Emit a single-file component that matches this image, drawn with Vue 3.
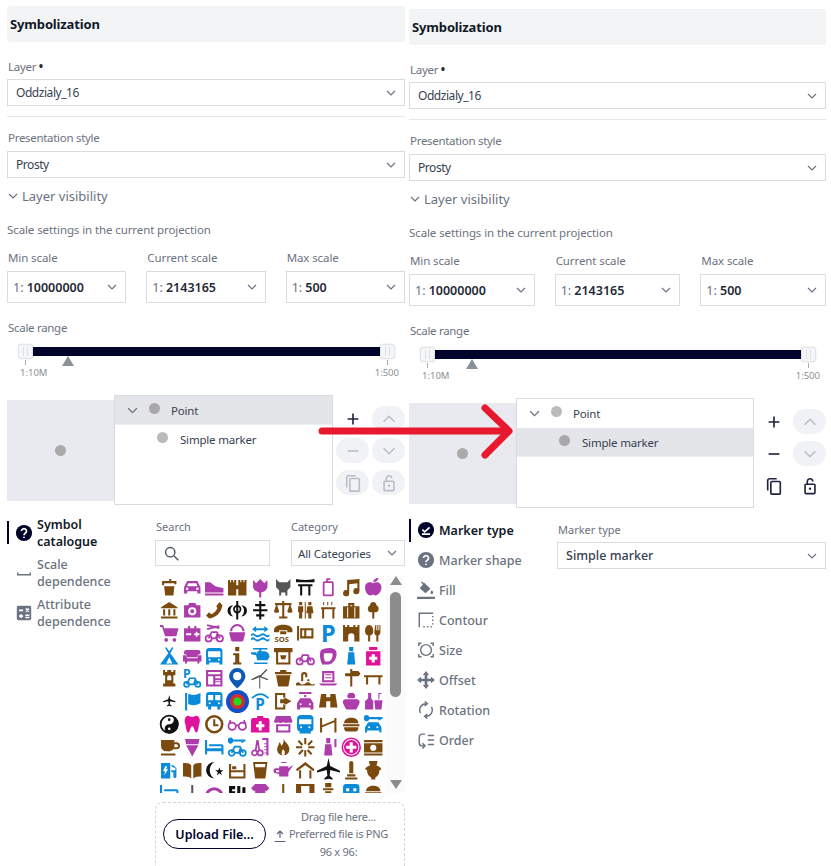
<template>
  <div class="page">
    <section v-for="panel in panels" :key="panel.id" class="panel" :class="panel.id">
      <h2 class="panel__title">Symbolization</h2>

      <label class="field-label field-label--first">Layer <span class="req">•</span></label>
      <div class="select">
        <span>Oddzialy_16</span>
        <svg class="chev" viewBox="0 0 12 12"><path d="M2 4l4 4 4-4" /></svg>
      </div>
      <div class="divider"></div>

      <label class="field-label">Presentation style</label>
      <div class="select">
        <span>Prosty</span>
        <svg class="chev" viewBox="0 0 12 12"><path d="M2 4l4 4 4-4" /></svg>
      </div>

      <div class="collapse">
        <svg class="chev" viewBox="0 0 12 12"><path d="M2 4l4 4 4-4" /></svg>
        <span>Layer visibility</span>
      </div>

      <div class="scale-title">Scale settings in the current projection</div>
      <div class="scales">
        <div v-for="s in scales" :key="s.label" class="scale">
          <label class="scale__label">{{ s.label }}</label>
          <div class="select select--scale">
            <span><i>1:</i> <b>{{ s.value }}</b></span>
            <svg class="chev" viewBox="0 0 12 12"><path d="M2 4l4 4 4-4" /></svg>
          </div>
        </div>
      </div>

      <label class="field-label field-label--range">Scale range</label>
      <div class="slider">
        <div class="slider__track"></div>
        <span class="slider__thumb slider__thumb--min"></span>
        <span class="slider__thumb slider__thumb--max"></span>
        <span class="slider__marker" :style="{ left: panel.marker + 'px' }"></span>
        <span class="slider__tick slider__tick--min">1:10M</span>
        <span class="slider__tick slider__tick--max">1:500</span>
      </div>

      <div class="symbol">
        <div class="symbol__preview"><span class="dot dot--preview"></span></div>
        <div class="symbol__tree">
          <div class="tree-row" :class="{ selected: panel.selected === 'point' }">
            <svg class="chev chev--tree" viewBox="0 0 12 12"><path d="M2 4l4 4 4-4" /></svg>
            <span class="dot"></span>
            <span class="tree-row__name">Point</span>
          </div>
          <div class="tree-row tree-row--child" :class="{ selected: panel.selected === 'marker' }">
            <span class="dot"></span>
            <span class="tree-row__name">Simple marker</span>
          </div>
        </div>
        <div class="symbol__actions" :class="{ enabled: panel.selected === 'marker' }">
          <button class="act act--on">
            <svg viewBox="0 0 20 20"><path d="M10 4v12M4 10h12" /></svg>
          </button>
          <button class="act act--soft">
            <svg viewBox="0 0 20 20"><path d="M4 13l6-6 6 6" /></svg>
          </button>
          <button class="act act--toggle">
            <svg viewBox="0 0 20 20"><path d="M4 10h12" /></svg>
          </button>
          <button class="act act--soft">
            <svg viewBox="0 0 20 20"><path d="M4 7l6 6 6-6" /></svg>
          </button>
          <button class="act act--toggle">
            <svg viewBox="0 0 20 20"><path d="M13 2H5a2 2 0 0 0-2 2v11" /><rect x="6.5" y="5" width="10.5" height="14" rx="1" /></svg>
          </button>
          <button class="act act--toggle">
            <svg viewBox="0 0 20 20"><path d="M7 8V5a3 3 0 0 1 6 0" /><rect x="4.5" y="8" width="11" height="10.5" rx="1" /><circle class="solid" cx="10" cy="13" r="1.3" /></svg>
          </button>
        </div>
      </div>

      <div class="lower">
        <nav class="side">
          <a v-for="item in panel.nav" :key="item.label" class="side__item" :class="{ active: item.active, tall: panel.id === 'catalogue' }">
            <svg class="side__icon" viewBox="0 0 20 20">
              <path v-if="item.fill" class="fill" fill-rule="evenodd" :d="item.fill" />
              <path v-if="item.line" class="line" :d="item.line" />
              <path v-if="item.knock" class="knock" :d="item.knock" />
            </svg>
            <span>{{ item.label }}</span>
          </a>
        </nav>

        <div v-if="panel.id === 'catalogue'" class="browser">
          <div class="filters">
            <div class="filter">
              <label class="mini-label">Search</label>
              <div class="search">
                <svg viewBox="0 0 20 20"><circle cx="8.5" cy="8.5" r="5.5" /><path d="M13 13l5 5" /></svg>
              </div>
            </div>
            <div class="filter">
              <label class="mini-label mini-label--flush">Category</label>
              <div class="select select--cat">
                <span>All Categories</span>
                <svg class="chev" viewBox="0 0 12 12"><path d="M2 4l4 4 4-4" /></svg>
              </div>
            </div>
          </div>

          <div class="symbols">
            <div class="symbols__grid">
              <svg v-for="(ic, i) in icons" :key="i" class="sym" :class="{ big: ic.big }" viewBox="0 0 20 20" :style="{ color: ic.c }">
                <path v-if="ic.d" fill="currentColor" fill-rule="evenodd" :d="ic.d" />
                <path v-if="ic.s" fill="none" stroke="currentColor" stroke-width="1.7" :d="ic.s" />
                <text v-if="ic.t" :x="ic.tx" :y="ic.ty" :font-size="ic.ts" fill="currentColor" class="sym__text">{{ ic.t }}</text>
                <template v-if="ic.rings">
                  <circle v-for="r in ic.rings" :key="r[0]" cx="10" cy="10" :r="r[0]" :fill="r[1]" />
                </template>
              </svg>
            </div>
            <div class="scroll">
              <span class="scroll__up"></span>
              <span class="scroll__thumb"></span>
              <span class="scroll__down"></span>
            </div>
          </div>

          <div class="upload">
            <button class="upload__btn">Upload File...</button>
            <svg class="upload__icon" viewBox="0 0 14 14"><path d="M7 9V2M4 5l3-3 3 3M1.5 12.5h11" /></svg>
            <p class="upload__hint">Drag file here...<br />Preferred file is PNG<br />96 x 96:</p>
          </div>
        </div>

        <div v-else class="marker">
          <label class="mini-label">Marker type</label>
          <div class="select select--marker">
            <span>Simple marker</span>
            <svg class="chev" viewBox="0 0 12 12"><path d="M2 4l4 4 4-4" /></svg>
          </div>
        </div>
      </div>
    </section>

    <svg class="arrow" viewBox="0 0 831 866">
      <path d="M322 431H508M485 408l24 23-24 24" />
    </svg>
  </div>
</template>

<script setup>
const B = '#7a4a0f'
const P = '#ad3dab'
const U = '#0a8ad8'
const K = '#111111'
const M = '#e0129c'
const G = '#555555'

function circle(cx, cy, r) {
  return `M${cx - r} ${cy}a${r} ${r} 0 1 0 ${r * 2} 0a${r} ${r} 0 1 0 ${-r * 2} 0z`
}

const bike = (y = 15, r = 3) =>
  `${circle(4.5, y, r)}${circle(15.5, y, r)}M4.5 ${y}l3-6h5l3 6M7.5 ${y}h4l2-6`
const bikeSmall = bike(15, 3)

const icons = [
  // row 1
  { c: B, d: 'M5 9h10l-1 9H6zM3 4h7V2h2v2h5v3h-2V6H5v2H3z' },
  { c: P, d: `M5 4h10l3 6v6h-3v-2H5v2H2v-6zM6 6l-1 3h10l-1-3z${circle(5, 11.5, 1.3)}${circle(15, 11.5, 1.3)}` },
  { c: P, d: 'M1 5h5l5 4 8 2v4H1zM1 16h18v2H1z' },
  { c: B, d: 'M1 3h2v2h1V3h2v2h1V3h2v15H1zM11 3h2v2h1V3h2v2h1V3h2v15h-8zM9 8h2v4H9z' },
  { c: P, d: 'M3 3l3 3 4-4 4 4 3-3v7a7 7 0 0 1-6 5v5H9v-5a7 7 0 0 1-6-5z' },
  { c: G, d: 'M3 2l3 3h8l3-3v8l-3 3v5h-2v-3H8v3H6v-5l-3-3z' },
  { c: K, d: 'M1 2q9 2 18 0v3H1zM3 7h14v2h-2v9h-2V9H7v9H5V9H3z' },
  { c: P, s: 'M6.5 5h7a1 1 0 0 1 1 1v11a1 1 0 0 1-1 1h-7a1 1 0 0 1-1-1V6a1 1 0 0 1 1-1zM9 5V2h3' },
  { c: B, d: 'M6 3l12-1v12a3 3 0 1 1-2-3V6L8 7v9a3 3 0 1 1-2-3z' },
  { c: P, d: 'M10 6c3-2 8-1 8 4s-4 8-6 8-1-1-2-1-1 1-3 1-5-3-5-8 5-6 8-4zM10 5c0-2 2-4 5-4 0 2-2 4-5 4z' },
  // row 2
  { c: B, d: 'M10 2l8 5v1H2V7zM4 9h2v6H4zM9 9h2v6H9zM14 9h2v6h-2zM2 16h16v2H2z' },
  { c: P, d: `M2 5h4l1-2h6l1 2h4v12H2z${circle(10, 11, 4)}${circle(10, 11, 2)}` },
  { c: B, d: 'M15 2l3 3c-1 7-6 12-13 13l-3-3 3-3 2 2c3-1 5-4 6-6l-1-2z' },
  { c: K, d: 'M9 1h2v18H9zM6 5a7 7 0 0 0 0 11 5 5 0 0 1 0-11zM14 5a7 7 0 0 1 0 11 5 5 0 0 0 0-11z', s: circle(10, 9, 3.2) },
  { c: K, d: 'M9 1h2v3h4v2h-4v3h6v2h-6v3h3v2h-3v3H9v-3H6v-2h3v-3H3V9h6V6H5V4h4z' },
  { c: B, d: 'M9 1h2v2h7v2h-1l2 6c0 2-5 2-5 0l2-6h-5v11h3v2H6v-2h3V5H4l2 6c0 2-5 2-5 0l2-6H2V3h7z' },
  { c: B, d: 'M4 2h3v3H4zM3 6h5v6H7v6H4v-6H3zM13 2h3v3h-3zM12 6h5l1 7h-2v5h-3v-5h-2zM9.5 2h1v16h-1z' },
  { c: B, d: 'M3 7h14v2h-1v9h-2V9H6v9H4V9H3zM5 2h1v3H5zM9 2h1v3H9zM13 2h1v3h-1z' },
  { c: B, d: 'M7 3h6v3h5v12H2V6h5zM9 5v1h2V5zM6 7v10h1V7zM13 7v10h1V7z' },
  { c: B, d: 'M10 2c3 0 3 3 3 3 3 1 3 6 0 7h-2v6H9v-6H7c-3-1-3-6 0-7 0 0 0-3 3-3z' },
  // row 3
  { c: P, d: `M1 2h3l1 3h14l-2 8H6L3 4H1z${circle(7, 16.5, 1.8)}${circle(15, 16.5, 1.8)}` },
  { c: P, d: 'M2 5h4V3h2v2h4V3h2v2h4v13H2zM4 10v2h5v-2zM12 10v2h1.5v1.5H15V12h2v-2h-2V8.5h-1.5V10z' },
  { c: P, s: `${bikeSmall}M3 2l12 3M3 6l12-3` },
  { c: P, d: 'M2 9h16l-2 8a2 2 0 0 1-2 1H6a2 2 0 0 1-2-1zM3 8a7 7 0 0 1 14 0h-2a5 5 0 0 0-10 0z' },
  { c: U, d: 'M2 6l4-3v2h8V3l4 3-4 3V7H6v2zM1 11q2-2 4 0t5 0 5 0 4 0v2q-2 2-4 0t-5 0-5 0-4 0zM1 15q2-2 4 0t5 0 5 0 4 0v2q-2 2-4 0t-5 0-5 0-4 0z' },
  { c: B, d: 'M1 7c0-7 18-7 18 0v2h-5V7H6v2H1zM7 8h6v3H7z', t: 'SOS', tx: 1.5, ty: 19, ts: 7.5 },
  { c: B, d: 'M2 3h2v14H2zM5 5h13v10H5zM7 7v6h2V7zM11 7v6h5V7z' },
  { c: U, t: 'P', tx: 3, ty: 18.5, ts: 23 },
  { c: B, d: 'M2 2h2v2h2V2h2v2h4V2h2v2h2V2h2v16h-5v-5a3 3 0 0 0-6 0v5H2z' },
  { c: B, d: 'M6 2c3 0 4 3 4 6s-2 4-3 4v6H5v-6C4 12 2 11 2 8s1-6 4-6zM12 2h1v5h1V2h1v5h1V2h1v7c0 2-1 3-2 3v6h-2v-6c-1 0-2-1-2-3z' },
  // row 4
  { c: U, d: 'M7 1l3 4 3-4 1 1-3 5 8 11H1L9 7 6 2zM10 11l-3 6h6z' },
  { c: P, d: 'M4 4h12a2 2 0 0 1 2 2v2h-2l-1 3H5L4 8H2V6a2 2 0 0 1 2-2zM1 9h3l1 3h10l1-3h3v6h-2v2h-2v-2H5v2H3v-2H1z' },
  { c: U, d: `M5 2h10a3 3 0 0 1 3 3v13h-3v-2H5v2H2V5a3 3 0 0 1 3-3zM4 5v6h12V5z${circle(5.5, 13.5, 1)}${circle(14.5, 13.5, 1)}` },
  { c: B, d: 'M8 1h4v4H8zM6 7h6v9h2v2H6v-2h2V9H6z' },
  { c: U, d: 'M3 2h14v1.5h-6V5h3a5 5 0 0 1 5 5v1l-2 3H7L6 9 1 8V6h5l1 2V5h2V3.5H3zM4 16h13v1.5H4z' },
  { c: B, d: 'M1 2h18v4h-2v12H3V6H1zM5 6v10h10V6zM7 9h6l-1 4H8z' },
  { c: P, s: bikeSmall },
  { c: P, d: 'M3 4c5-3 14-3 15 2s-3 12-8 12H4c-2-5-3-10-1-14zM6 7c-1 3 0 6 1 8h3c3 0 5-5 4-8z' },
  { c: U, d: 'M8 1h4v4H8zM7 6h6v3l1 9H6l1-9z' },
  { c: M, d: 'M6 1h8v3H6zM3 5h14v14H3zM8.5 8v2.5H6v3h2.5V16h3v-2.5H14v-3h-2.5V8z' },
  // row 5
  { c: B, d: 'M4 2h2v2h2V2h4v2h2V2h2v5h-2v8h2v3H4v-3h2V7H4zM8 9v3h4V9a2 2 0 0 0-4 0z' },
  { c: U, s: bike(16, 2.4), t: 'P', tx: 1, ty: 10, ts: 12 },
  { c: P, d: 'M2 2h16v16H2zM4 4v2h12V4zM4 8v8h5V8zM11 8v2h5V8zM11 12v1h5v-1zM11 14v2h5v-2z' },
  { c: '#0b5bb5', d: `M10 0a8 8 0 0 1 8 8c0 4-5 9-8 12-3-3-8-8-8-12a8 8 0 0 1 8-8z${circle(10, 8, 4)}` },
  { c: G, d: 'M10 7l6-6 1 1-6 6 7 3-1 1-7-3v11H9V9l-7 3-1-1 8-4z' },
  { c: B, d: 'M7 2h6v2h5v2H2V4h5zM3 7h14l-2 11H5z' },
  { c: B, d: 'M6 13V7a3 3 0 0 1 6 0v2h-2V7a1 1 0 0 0-2 0v6zM12 11h2v2h-2zM1 15q2-2 4 0t5 0 5 0 4 0v2H1z' },
  { c: P, d: 'M4 3h12v11H4zM6 5v7h8V5zM1 15h18l-2 2H3zM7 6h6v1H7zM7 9h6v1H7z' },
  { c: B, d: 'M9 1h2v2h6l2 2.5L17 8h-6v10H9V8H4V5h5z' },
  { c: B, d: 'M1 7h18v2h-2v7h-2V9H5v7H3V9H1z' },
  // row 6
  { c: K, d: 'M10 4l1 4 5 2v1l-5-1-.5 3 1.5 1v1l-2-.5-2 .5v-1l1.5-1L9 10l-5 1v-1l5-2z' },
  { c: U, d: 'M3 2h2v17H3zM6 3q6 2 12-1v10q-6 3-12 1z' },
  { c: U, d: `M5 1h10a3 3 0 0 1 3 3v11h-2v3h-3v-3H7v3H4v-3H2V4a3 3 0 0 1 3-3zM4 4v5h5V4zM11 4v5h5V4z${circle(5.5, 12, 1)}${circle(14.5, 12, 1)}` },
  { c: U, rings: [[10, '#1250c8'], [6.5, '#d92b2b'], [3.5, '#1fdc1f']], big: true },
  { c: U, s: 'M2 7q8-8 16 0', t: 'P', tx: 5, ty: 19, ts: 15 },
  { c: B, d: 'M2 2h10v5h-2V4H4v12h6v-3h2v5H2zM11 6l7 4-7 4v-2H7V8h4z' },
  { c: P, d: `M5 7h10l3 5v6h-3v-2H5v2H2v-6zM4 1h12v2H4zM9 4h2v2H9z${circle(5.5, 13, 1)}${circle(14.5, 13, 1)}` },
  { c: B, d: 'M3 3h5v3h4V3h5l2 13h-7v-6H8v6H1z' },
  { c: P, d: 'M4 8h12a3 3 0 0 1 2 4l-3 6H5l-3-6a3 3 0 0 1 2-4zM10 2a3 3 0 0 1 3 5H7a3 3 0 0 1 3-5z' },
  { c: P, d: 'M5 2h3v5l2 3v8H2v-8l3-3zM11 9h8l-1 9h-6zM15 2h3v1h-2v5h-1z' },
  // row 7
  { c: K, d: `M10 1a9 9 0 0 1 0 18 4.5 4.5 0 0 1 0-9 4.5 4.5 0 0 0 0-9z${circle(10, 14.5, 1.3)}${circle(10, 5.5, 1.3)}`, s: circle(10, 10, 8.4) },
  { c: M, d: 'M5 2c2-1 3 1 5 1s3-2 5-1 3 4 2 7-1 9-3 9-2-6-4-6-2 6-4 6-2-6-3-9 0-6 2-7z' },
  { c: B, d: `${circle(10, 10, 9)}${circle(10, 10, 6.5)}M9 5h2v5h3v2H9z` },
  { c: P, s: `${circle(5, 12, 3.6)}${circle(15, 12, 3.6)}M8.5 11h3M1.5 11l2-5M18.5 11l-2-5` },
  { c: M, d: 'M7 4V2h6v2h4a2 2 0 0 1 2 2v12H1V6a2 2 0 0 1 2-2zM8.5 7v3H6v3h2.5v3h3v-3H14v-3h-2.5V7z' },
  { c: P, d: 'M3 2h14l2 5c0 2-3 2-4 1-1 1-3 1-5 0-2 1-4 1-5 0-1 1-4 1-4-1zM3 10h14v8H3zM5 12v4h10v-4z' },
  { c: U, d: `M6 1h8a4 4 0 0 1 4 4v9a3 3 0 0 1-3 3l1 2H4l1-2a3 3 0 0 1-3-3V5a4 4 0 0 1 4-4zM4 5v5h12V5z${circle(6, 13, 1)}${circle(14, 13, 1)}` },
  { c: B, d: 'M2 4h2v14H2zM16 4h2v14h-2zM4 11l12-5v2L4 13z' },
  { c: B, d: 'M3 9c0-7 14-7 14 0zM2 10h16v2H2zM3 13h14c0 3-1 4-3 4H6c-2 0-3-1-3-4z' },
  { c: U, d: `M1 4a2.5 2.5 0 0 1 5-1h13v2h-2v1h-2V5H6a2.5 2.5 0 0 1-5-1zM5 8h10l3 5v5h-2v-2H4v2H2v-5z${circle(6, 13, 1)}${circle(14, 13, 1)}` },
  // row 8
  { c: B, d: 'M2 3h13v2h2a3 3 0 0 1 0 7h-3a6 6 0 0 1-5 2H7a5 5 0 0 1-5-5zM15 7v3h2a1.5 1.5 0 0 0 0-3zM2 16h14v2H2z' },
  { c: P, d: 'M3 2h14l-1 5H4zM4 8h12l-6 11z' },
  { c: U, d: 'M1 3h2v8h14V9H5V7h12a2 2 0 0 1 2 2v8h-2v-3H3v3H1z' },
  { c: U, d: 'M1 3.5a2.5 2.5 0 0 1 5-1h12v2h-2v1h-2v-1H6a2.5 2.5 0 0 1-5-1z', s: bike(15.5, 2.8) },
  { c: P, d: 'M12 1h6v17h-2v-2h-2v-1h2v-2h-2v-1h2v-2h-2V9h2V7h-2V6h2V3h-4z', s: `${circle(4.5, 15.5, 2.5)}${circle(10, 15.5, 2.5)}M5.5 13.5L7 3M9 13.5L7.5 3` },
  { c: B, d: 'M10 1c1 4 6 6 6 11a6 6 0 0 1-12 0c0-3 2-4 2-7 2 1 2 3 2 4 2-2 3-5 2-8zM10 12c-2 2-2 6 0 6s2-4 0-6z' },
  { c: B, d: 'M9 1h2v6H9zM9 13h2v6H9zM1 9h6v2H1zM13 9h6v2h-6zM4 3l4 4-1.5 1.5-4-4zM16 3l1.5 1.5-4 4L12 7zM7 12l1.5 1.5-4 4L3 16zM13 12l4 4-1.5 1.5-4-4z' },
  { c: P, d: 'M8 1h4v5H8zM7 7h6l1 11H6zM16 2h2v8h-2z' },
  { c: M, d: `${circle(10, 10, 9.5)}${circle(10, 10, 8)}${circle(10, 10, 7)}M8.5 5v3.5H5v3h3.5V15h3v-3.5H15v-3h-3.5V5z` },
  { c: B, d: `M1 3h18v2H1zM1 6h18v9H1z${circle(10, 10.5, 3)}M1 16h18v2H1z` },
  // row 9
  { c: U, d: 'M2 3h9v15H2zM6 6l-2 5h2l-1 4 4-6H7l1-3zM12 5h2l3 3v8a1.5 1.5 0 0 1-3 0v-4h-2v-2h4V8l-4-2z' },
  { c: B, d: 'M1 3c3 0 6 0 8 2v13c-2-2-5-2-8-2zM19 3c-3 0-6 0-8 2v13c2-2 5-2 8-2z' },
  { c: K, d: 'M10 2a8 8 0 1 0 0 16 9.5 9.5 0 0 1 0-16zM15 7l1 3h3l-2.5 2 1 3-2.5-2-2.5 2 1-3L11 10h3z' },
  { c: B, d: 'M2 4h2v6h12V4h2v14H2zM5 6h4v3H5zM4 12v4h12v-4z' },
  { c: B, d: 'M3 2h14l-2 16H5zM5 4l.3 3h9.4l.3-3z' },
  { c: P, d: 'M6 6h9v10H6zM15 8l4-3v1l-4 6zM6 8H3a2 2 0 0 0 0 5l3 1v-2H3v-2h3zM8 2h5v1H8z' },
  { c: B, d: 'M10 2l9 7-1 2-8-6-8 6-1-2zM4 10h2v8H4zM14 10h2v8h-2z' },
  { c: K, d: 'M10 0l1.5 7 8.5 4v1.5l-8.500-2-.5 5 2.5 2V19L10 18l-3.500 1v-1.5l2.500-2-.5-5-8.500 2V11l8.500-4z', big: true },
  { c: B, d: 'M8 3a2 2 0 0 1 4 0v10H8zM6 14h8v2H6zM4 17h12v2H4z' },
  { c: B, d: 'M6 1h8v2l-1 2c3 1 5 3 5 4l-2 1c0 4-2 6-4 7v2H8v-2c-2-1-4-3-4-7L2 9c0-1 2-3 5-4L6 3z' },
  // row 10, cut off by the list edge
  { c: U, d: 'M1 3h2v8h14V9H5V7h12a2 2 0 0 1 2 2v8h-2v-3H3v3H1z' },
  { c: G, d: 'M9 3h2v15H9z' },
  { c: P, d: 'M1 14a9 9 0 0 1 18 0h-3a6 6 0 0 0-12 0z' },
  { c: K, d: 'M2 4h6v3H5v2h3v3H2zM10 4h3v8h-3zM15 5h3v7h-3z' },
  { c: P, d: 'M5 2h10l4 4-3 3-1-1v10H5V8L4 9 1 6z' },
  { c: B, d: 'M9 2h2v16H9z' },
  { c: B, d: 'M1 2h18v16H1zM6 4v12h8V4z' },
  { c: B, d: 'M7 1h6v4H7zM5 6h10v2H5zM7 9h6v9H7z' },
  { c: U, d: 'M2 5a3 3 0 0 1 3-3h10a3 3 0 0 1 3 3v13H2zM5 6v3h3V6zM12 6v3h3V6z' },
  { c: B, d: 'M3 9c0-7 14-7 14 0zM2 10h16v2H2zM3 13h14c0 3-1 4-3 4H6c-2 0-3-1-3-4z' },
]

const scales = [
  { label: 'Min scale', value: '10000000' },
  { label: 'Current scale', value: '2143165' },
  { label: 'Max scale', value: '500' },
]

const questionFill = circle(10, 10, 9)
const questionMark = 'M7.2 7.8a2.8 2.8 0 1 1 4.2 2.5c-.9.5-1.400 1-1.400 2.200M10 14.200v1.300'

const panels = [
  {
    id: 'catalogue',
    marker: 55,
    selected: 'point',
    nav: [
      { label: 'Symbol catalogue', active: true, fill: questionFill, knock: questionMark },
      { label: 'Scale dependence', line: 'M3 9.5v2.5h14V9.5' },
      {
        label: 'Attribute dependence',
        fill: 'M4 2h12a2 2 0 0 1 2 2v12a2 2 0 0 1-2 2H4a2 2 0 0 1-2-2V4a2 2 0 0 1 2-2z',
        knock: 'M4.5 7h4.5M6.75 11.5v4M4.5 13.5h4.5M11.5 12.5h4.5M11.5 15h4.5M12 5l3.5 3.5M15.5 5L12 8.5',
      },
    ],
  },
  {
    id: 'marker-panel',
    marker: 57,
    selected: 'marker',
    nav: [
      { label: 'Marker type', active: true, fill: questionFill, knock: 'M6 9.5l2.5 2.5 5.5-5M5.5 14.5h9' },
      { label: 'Marker shape', fill: questionFill, knock: questionMark },
      { label: 'Fill', fill: 'M8 2l7 6.500-5.500 5L3 8zM16.500 10c1 1.500 1.500 2.200 1.500 3a1.500 1.500 0 0 1-3 0c0-.8.5-1.500 1.500-3zM0 17.500h20V20H0z', line: 'M5 1l3 3' },
      { label: 'Contour', line: 'M18 2.5H2.5V18M7 17.5h1.5M11 17.5h1.5M15 17.5h1.5M17.5 15v-1.5M17.5 11V9.5M17.5 7V5.5' },
      { label: 'Size', line: 'M16 10a6 6 0 1 1-12 0 6 6 0 0 1 12 0zM2 5.5V2.5h3M15 2.5h3v3M18 14.5v3h-3M5 17.5H2v-3' },
      { label: 'Offset', fill: 'M10 0l3.5 4.5h-2v4h4v-2L20 10l-4.500 3.500v-2h-4v4h2L10 20l-3.500-4.500h2v-4h-4v2L0 10l4.500-3.500v2h4v-4h-2z' },
      { label: 'Rotation', line: 'M4 13.5A7 7 0 0 1 10.5 3M16 6.5A7 7 0 0 1 9.5 17M8.5 0.5l3 2.5-3 2.5M11.5 14.5l-3 2.5 3 2.5' },
      { label: 'Order', line: 'M9 3.5H6a3.5 3.5 0 0 0-3.5 3.5v6A3.5 3.5 0 0 0 6 16.5h2M6 13.5l3 3-3 3M12 5h7M12 10h7M12 15h7' },
    ],
  },
]
</script>

<style>
html,
body {
  margin: 0;
  overflow: hidden;
  background: #fff;
}
</style>

<style scoped>
.page {
  position: relative;
  display: flex;
  align-items: flex-start;
  height: 866px;
  overflow: hidden;
  font-family: "Noto Sans", "Liberation Sans", sans-serif;
  color: #374151;
}

.panel {
  display: flex;
  flex-direction: column;
}
.panel.catalogue {
  width: 398px;
  margin: 6px 0 0 7px;
}
.panel.marker-panel {
  width: 417px;
  margin: 9px 0 0 4px;
}

.panel__title {
  height: 36px;
  margin: 0;
  padding: 0 3px;
  border-radius: 3px;
  background: #f3f4f6;
  font-size: 13px;
  font-weight: 700;
  line-height: 36px;
  letter-spacing: -0.15px;
  color: #111827;
}

.field-label {
  display: block;
  height: 16px;
  margin: 13px 1px 5px;
  font-size: 11.5px;
  line-height: 16px;
  letter-spacing: -0.3px;
  color: #6b7280;
}
.field-label--first {
  margin-top: 17px;
  margin-bottom: 4px;
}
.field-label--range {
  margin-top: 17px;
  margin-bottom: 4px;
}
.req {
  color: #1f2937;
  font-weight: 700;
}

.select {
  display: flex;
  align-items: center;
  justify-content: space-between;
  box-sizing: border-box;
  height: 27px;
  padding: 0 7px 0 8px;
  border: 1px solid #d9dde3;
  font-size: 12px;
  letter-spacing: -0.45px;
  color: #374151;
}
.select--scale {
  height: 32px;
  padding-left: 5px;
  letter-spacing: 0;
}
.select--scale i {
  font-style: normal;
  font-size: 12.5px;
  color: #6b7280;
}
.select--scale b {
  font-size: 12.5px;
  font-weight: 600;
  color: #1f2937;
}
.select--cat {
  height: 26px;
  padding: 0 6px;
  font-size: 11.5px;
  letter-spacing: -0.1px;
}
.select--marker {
  font-size: 12.5px;
  font-weight: 500;
  letter-spacing: 0;
}

.chev {
  flex: none;
  width: 12px;
  height: 12px;
  fill: none;
  stroke: #6b7280;
  stroke-width: 1.2;
}

.divider {
  height: 1px;
  margin-top: 10px;
  background: #e5e7eb;
}

.collapse {
  display: flex;
  align-items: center;
  gap: 3px;
  height: 20px;
  margin-top: 8px;
  font-size: 13px;
  color: #6b7280;
}

.scale-title {
  height: 16px;
  margin-top: 16px;
  font-size: 11.5px;
  line-height: 16px;
  letter-spacing: -0.1px;
  color: #6b7280;
}

.scales {
  display: flex;
  gap: 20px;
  margin-top: 12px;
}
.scale {
  flex: 1;
}
.scale__label {
  display: block;
  height: 16px;
  margin: 0 1px 5px;
  font-size: 11.5px;
  line-height: 16px;
  letter-spacing: -0.1px;
  color: #6b7280;
}

.slider {
  position: relative;
  height: 55px;
}
.slider__track {
  position: absolute;
  top: 7px;
  left: 14px;
  right: 12px;
  height: 9px;
  background: #00032a;
}
.slider__thumb {
  position: absolute;
  top: 4px;
  width: 15px;
  height: 15px;
  box-sizing: border-box;
  border: 1px solid #e2e4e8;
  border-radius: 3px;
  background: #f5f6f7;
  box-shadow: 0 0 2px rgba(0, 0, 0, 0.12);
}
.slider__thumb::before {
  content: "";
  position: absolute;
  top: 2px;
  left: 4px;
  width: 3px;
  height: 9px;
  border-left: 1px solid #dcdfe4;
  border-right: 1px solid #dcdfe4;
}
.slider__thumb::after {
  content: "";
  position: absolute;
  top: 15px;
  left: 6px;
  width: 1px;
  height: 5px;
  background: #a8acb3;
}
.slider__thumb--min {
  left: 11px;
}
.slider__thumb--max {
  right: 10px;
}
.slider__marker {
  position: absolute;
  top: 16px;
  width: 0;
  height: 0;
  border-left: 6px solid transparent;
  border-right: 6px solid transparent;
  border-bottom: 10px solid #8a8f98;
}
.slider__tick {
  position: absolute;
  top: 26px;
  font-size: 9.5px;
  line-height: 14px;
  color: #8a8f98;
}
.slider__tick--min {
  left: 13px;
}
.slider__tick--max {
  right: 6px;
}

.symbol {
  display: flex;
  align-items: center;
  height: 110px;
}
.symbol__preview {
  display: flex;
  align-items: center;
  justify-content: center;
  flex: none;
  width: 107px;
  height: 101px;
  background: #e8eaef;
}
.symbol__tree {
  box-sizing: border-box;
  flex: 1;
  height: 110px;
  border: 1px solid #d9dde3;
}
.symbol__actions {
  display: grid;
  grid-template-columns: 33px 33px;
  grid-auto-rows: 25px;
  gap: 7px 3px;
  box-sizing: border-box;
  flex: none;
  width: 72px;
  height: 110px;
  padding: 11px 0 0 3px;
}

.dot {
  display: inline-block;
  flex: none;
  width: 11px;
  height: 11px;
  border-radius: 50%;
  background: #bbbbbb;
}
.dot--preview {
  background: #aaaaaa;
}

.tree-row {
  display: flex;
  align-items: center;
  height: 28px;
  padding-left: 11px;
  font-size: 11.5px;
  letter-spacing: -0.2px;
  color: #374151;
  border-bottom: 1px solid transparent;
}
.tree-row .dot {
  margin: -4px 0 0 10px;
}
.tree-row.selected {
  background: #e4e5e9;
  border-bottom-color: #eceef1;
}
.tree-row.selected .dot {
  background: #a8a8a8;
}
.chev--tree {
  width: 13px;
  height: 13px;
}
.tree-row__name {
  margin-left: 11px;
}
.tree-row--child {
  padding-left: 32px;
}
.tree-row--child .tree-row__name {
  margin-left: 12px;
}

.act {
  display: flex;
  align-items: center;
  justify-content: center;
  padding: 0;
  border: 0;
  border-radius: 13px;
  background: transparent;
}
.act svg {
  width: 18px;
  height: 18px;
  fill: none;
  stroke: #1e2140;
  stroke-width: 1.8;
}
.act .solid {
  fill: #1e2140;
  stroke: none;
}
.act--soft {
  background: #f1f2f5;
}
.act--soft svg {
  stroke: #b9bdc6;
}
.symbol__actions:not(.enabled) .act--toggle {
  background: #f1f2f5;
}
.symbol__actions:not(.enabled) .act--toggle svg {
  stroke: #b9bdc6;
}
.symbol__actions:not(.enabled) .act--toggle .solid {
  fill: #b9bdc6;
  stroke: none;
}

.lower {
  display: flex;
  align-items: flex-start;
}
.catalogue .lower {
  margin-top: 11px;
}
.marker-panel .lower {
  margin-top: 10px;
}

.side {
  display: flex;
  flex: none;
  flex-direction: column;
  gap: 6px;
  width: 148px;
}
.side__item {
  position: relative;
  display: flex;
  align-items: center;
  gap: 4px;
  box-sizing: border-box;
  height: 24px;
  padding-left: 8px;
  font-size: 12.5px;
  font-weight: 500;
  line-height: 17px;
  color: #6b7280;
}
.side__item.tall {
  height: 34px;
}
.side__item.tall span {
  max-width: 82px;
}
.side__item.active {
  font-weight: 600;
  color: #111827;
}
.side__item.active::before {
  content: "";
  position: absolute;
  top: 1px;
  left: 0;
  width: 2px;
  height: 23px;
  background: #00032a;
}
.side__item.tall.active::before {
  top: 5px;
}
.side__icon {
  flex: none;
  width: 18px;
  height: 18px;
  color: #6b7280;
}
.side__item.active .side__icon {
  color: #00032a;
}
.side__icon .fill {
  fill: currentColor;
}
.side__icon .line {
  fill: none;
  stroke: currentColor;
  stroke-width: 1.6;
}
.side__icon .knock {
  fill: none;
  stroke: #fff;
  stroke-width: 1.9;
}

.browser {
  width: 250px;
  padding-top: 3px;
}

.filters {
  display: flex;
  justify-content: space-between;
}
.filter:first-child {
  width: 115px;
}
.filter:last-child {
  width: 114px;
}
.mini-label {
  display: block;
  height: 16px;
  margin: 0 1px 5px;
  font-size: 11px;
  line-height: 16px;
  color: #6b7280;
}
.mini-label--flush {
  margin-left: 0;
}
.search {
  display: flex;
  align-items: center;
  box-sizing: border-box;
  height: 26px;
  padding-left: 7px;
  border: 1px solid #d9dde3;
}
.search svg {
  width: 17px;
  height: 17px;
  fill: none;
  stroke: #4b5563;
  stroke-width: 1.7;
}

.symbols {
  display: flex;
  justify-content: space-between;
  height: 217px;
  margin-top: 10px;
  overflow: hidden;
}
.symbols__grid {
  display: grid;
  grid-template-columns: repeat(10, 22.7px);
  grid-auto-rows: 22.8px;
  justify-items: center;
  align-items: center;
  align-content: start;
  margin-left: 3px;
}
.sym {
  display: block;
  width: 20.5px;
  height: 20.5px;
  overflow: visible;
}
.sym.big {
  width: 23px;
  height: 23px;
}
.sym__text {
  font-family: "Noto Sans", sans-serif;
  font-weight: 700;
}

.scroll {
  display: flex;
  flex-direction: column;
  align-items: center;
  box-sizing: border-box;
  width: 19px;
  background: #fbfbfb;
}
.scroll__up,
.scroll__down {
  flex: none;
  width: 0;
  height: 0;
  border-left: 6px solid transparent;
  border-right: 6px solid transparent;
}
.scroll__up {
  border-bottom: 9px solid #8c8c8c;
}
.scroll__thumb {
  flex: none;
  width: 11px;
  height: 105px;
  margin-top: 7px;
  border-radius: 6px;
  background: #8c8c8c;
}
.scroll__down {
  margin-top: 83px;
  border-top: 9px solid #8c8c8c;
}

.upload {
  display: flex;
  align-items: center;
  box-sizing: border-box;
  height: 72px;
  margin-top: 9px;
  padding: 0 14px 8px 7px;
  border: 1px dashed #d1d5db;
  border-radius: 8px;
}
.upload__btn {
  flex: none;
  box-sizing: border-box;
  width: 103px;
  height: 30px;
  padding: 0;
  border: 1px solid #00032a;
  border-radius: 15px;
  background: #fff;
  font-family: inherit;
  font-size: 12.5px;
  font-weight: 600;
  color: #00032a;
}
.upload__icon {
  flex: none;
  width: 14px;
  height: 14px;
  margin: 4px 0 0 7px;
  fill: none;
  stroke: #5b6472;
  stroke-width: 1.2;
}
.upload__hint {
  flex: 1;
  margin: 0;
  font-size: 11px;
  line-height: 17.5px;
  letter-spacing: -0.25px;
  text-align: center;
  color: #6b7280;
}

.marker {
  flex: 1;
  padding-top: 4px;
}
.marker .mini-label {
  margin-bottom: 4px;
}

.arrow {
  position: absolute;
  top: 0;
  left: 0;
  width: 831px;
  height: 866px;
  fill: none;
  stroke: #e8192f;
  stroke-width: 7;
  stroke-linecap: round;
  stroke-linejoin: round;
  pointer-events: none;
}
</style>
